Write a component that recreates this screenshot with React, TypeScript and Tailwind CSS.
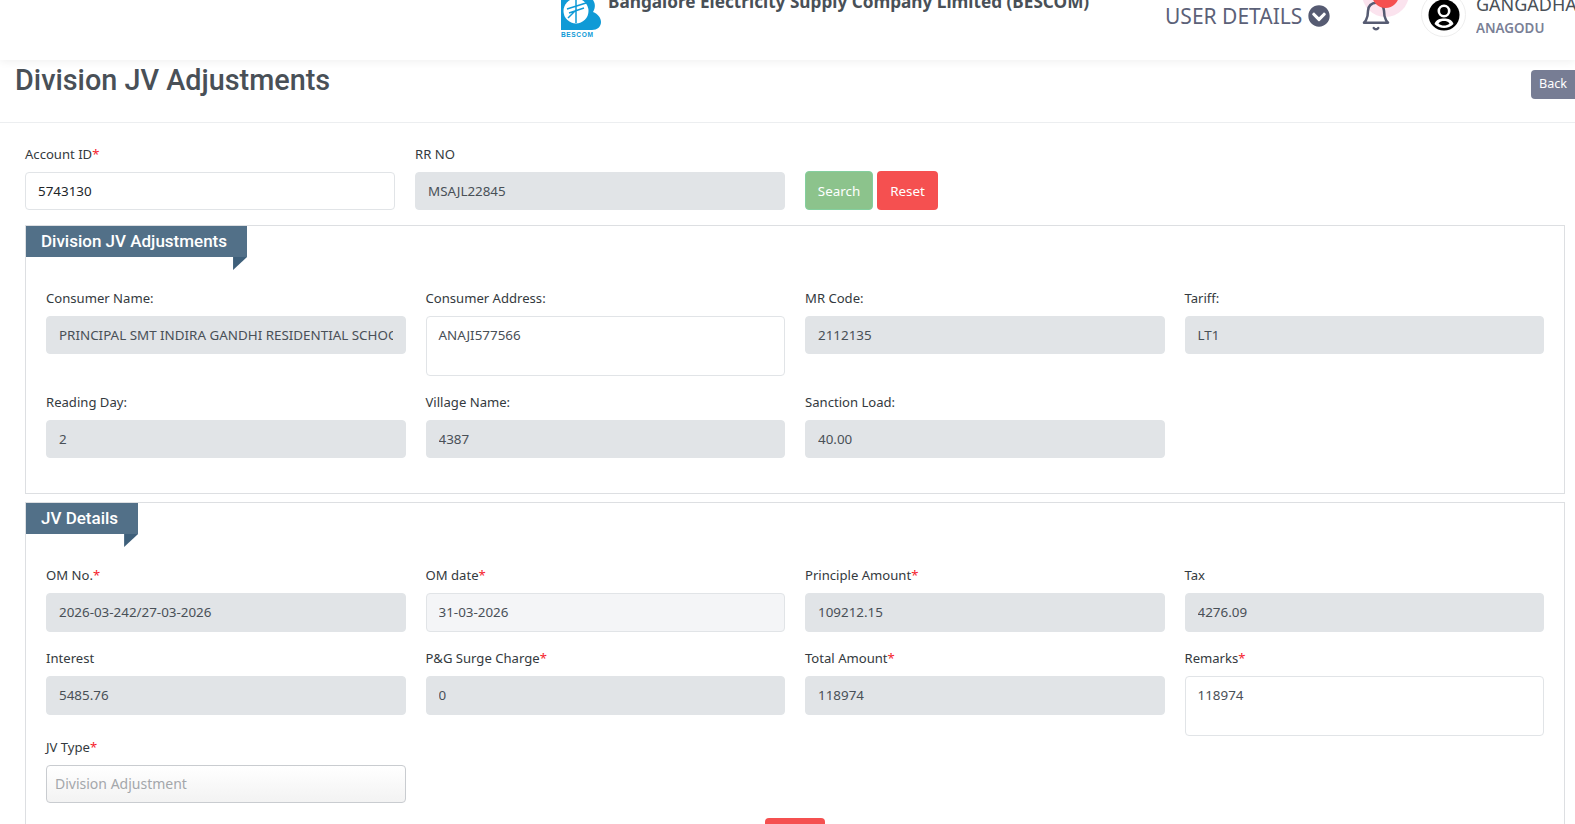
import React from "react";
import { FaChevronCircleDown } from "react-icons/fa";
import { LuBell } from "react-icons/lu";

const body = "[font-family:'Noto_Sans',sans-serif]";

function Req() {
  return <span className="text-[#f5222d]">*</span>;
}

function Label({ text, req }: { text: string; req?: boolean }) {
  return (
    <label className="block text-[13.1px] leading-[20px] text-[#343a40]">
      {text}
      {req && <Req />}
    </label>
  );
}

function Field({ label, value, req, h = "h-[38px]", mb = "mb-[8px]" }: { label: string; value: string; req?: boolean; h?: string; mb?: string }) {
  return (
    <div className={mb}>
      <Label text={label} req={req} />
      <input
        readOnly
        defaultValue={value}
        className={`mt-[8px] block w-full ${h} rounded-[4px] border border-[#e1e4e7] bg-[#e1e4e7] px-[12px] text-[13.4px] text-[#495057] outline-none`}
      />
    </div>
  );
}

function Area({ label, value, req }: { label: string; value: string; req?: boolean }) {
  return (
    <div>
      <Label text={label} req={req} />
      <textarea
        readOnly
        defaultValue={value}
        className="mt-[8px] block h-[60px] w-full resize-none rounded-[4px] border border-[#e1e4e7] bg-white px-[12px] py-[8px] text-[13.4px] leading-[20px] text-[#495057] outline-none"
      />
    </div>
  );
}

function Ribbon({ text }: { text: string }) {
  return (
    <div className="relative w-fit bg-[#527088] pl-[15px] pr-[20px] text-[17px] font-medium leading-[31px] text-white [font-family:Roboto,sans-serif]">
      {text}
      <div className="absolute right-0 top-full h-[13px] w-[14px] bg-[#3e5f7a] [clip-path:polygon(0_0,100%_0,0_100%)]" />
    </div>
  );
}

function Logo() {
  return (
    <div className="flex w-[40px] flex-col items-start">
      <svg width="40" height="30" viewBox="0 0 40 30" className="block">
        <path d="M0 0H32C34 3 35 7 32 12C37 14 40 18 40 22C40 27 36 30 31 30H0Z" fill="#0f9ad6" />
        <circle cx="15" cy="11" r="12.5" fill="#ffffff" />
        <path d="M15 0V23M6 9L25 3M8 13L23 8M15 10L7 18" stroke="#0f9ad6" strokeWidth="1.5" fill="none" />
      </svg>
      <span className="mt-[2px] text-[6.6px] font-black leading-[6px] tracking-[0.6px] text-[#0f9ad6] [font-family:'Liberation_Sans',sans-serif]">BESCOM</span>
    </div>
  );
}

function Avatar() {
  return (
    <svg width="32" height="32" viewBox="0 0 32 32" className="block">
      <circle cx="16" cy="16" r="15.5" fill="#000000" />
      <circle cx="16" cy="12" r="5.2" fill="none" stroke="#ffffff" strokeWidth="2.6" />
      <path d="M6.5 25C8 20.5 12 19.5 16 19.5C20 19.5 24 20.5 25.5 25C23 27.8 19.5 29 16 29C12.5 29 9 27.8 6.5 25Z" fill="#ffffff" />
      <path d="M10.5 24.5C11.8 22.6 14 22 16 22C18 22 20.2 22.6 21.5 24.5C20 26 18 26.6 16 26.6C14 26.6 12 26 10.5 24.5Z" fill="#000000" />
    </svg>
  );
}

function Header() {
  return (
    <header className="flex h-[60px] items-start overflow-hidden bg-white pl-[561px] shadow-[0_2px_8px_rgba(0,0,0,0.06)]">
      <div className="-mt-[4px] flex items-start">
        <div className="mt-[4px]"><Logo /></div>
        <div className="ml-[7px] -mt-[6px] w-[530px] whitespace-nowrap text-[17.2px] font-bold leading-[24px] text-[#495057]">
          Bangalore Electricity Supply Company Limited (BESCOM)
        </div>
      </div>
      <div className="ml-[27px] mt-[1px] flex items-center whitespace-nowrap text-[21px] leading-[30px] text-[#5c6178]">
        USER DETAILS
        <FaChevronCircleDown className="ml-[6px] text-[22px] text-[#565b72]" />
      </div>
      <div className="relative ml-[30px] mt-0 h-[32px] w-[32px] text-[#565b72]">
        <span className="absolute -top-[30px] left-[2px] h-[47px] w-[47px] rounded-full bg-[#fbe3ee]" />
        <LuBell size={32} strokeWidth={1.9} className="relative" />
        <span className="absolute -top-[19px] left-[12px] h-[27px] w-[27px] rounded-full bg-[#f55050]" />
      </div>
      <div className="ml-[29px] -mt-[8px] flex h-[45px] w-[45px] items-center justify-center rounded-full border border-[#eeeeee] bg-white">
        <Avatar />
      </div>
      <div className="ml-[10px] -mt-[8px] w-[100px] overflow-hidden whitespace-nowrap">
        <div className="text-[18px] leading-[24px] text-[#495057]">GANGADHARA</div>
        <div className="mt-[3px] text-[13.4px] font-semibold leading-[18px] text-[#7a7f96]">ANAGODU</div>
      </div>
    </header>
  );
}

export default function App() {
  return (
    <div className={`h-[824px] w-[1575px] overflow-hidden bg-white ${body}`}>
      <Header />
      <div className="flex h-[63px] items-start justify-between border-b border-[#eceef0]">
        <h1 className="ml-[15px] mt-[2px] text-[28.8px] font-medium leading-[36px] text-[#495057] [font-family:Roboto,sans-serif]">Division JV Adjustments</h1>
        <button className="mt-[10px] h-[29px] w-[44px] rounded-l-[4px] bg-[#777d94] text-[12.6px] text-white">Back</button>
      </div>

      <div className="px-[25px] pt-[21px]">
        <div className="flex gap-[20px]">
          <div className="w-[370px]">
            <Label text="Account ID" req />
            <input defaultValue="5743130" className="mt-[8px] block h-[38px] w-full rounded-[4px] border border-[#e1e4e7] bg-white px-[12px] text-[13.4px] text-[#212529] outline-none" />
          </div>
          <div className="w-[370px]">
            <Label text="RR NO" />
            <input readOnly defaultValue="MSAJL22845" className="mt-[8px] block h-[38px] w-full rounded-[4px] border border-[#e1e4e7] bg-[#e1e4e7] px-[12px] text-[13.4px] text-[#495057] outline-none" />
          </div>
          <div className="mt-[27px] flex h-[39px] gap-[4px]">
            <button className="w-[68px] rounded-[4px] border border-[#84cf9e] bg-[#8cc38c] pt-[1px] text-[13.4px] text-white">Search</button>
            <button className="w-[61px] rounded-[4px] bg-[#f55050] pt-[1px] text-[13.4px] text-white">Reset</button>
          </div>
        </div>

        <section className="mt-[15px] h-[269px] w-[1540px] border border-[#dddfe2]">
          <Ribbon text="Division JV Adjustments" />
          <div className="grid grid-cols-4 gap-x-[20px] px-[20px] pt-[31px]">
            <Field label="Consumer Name:" value="PRINCIPAL SMT INDIRA GANDHI RESIDENTIAL SCHOOL" />
            <Area label="Consumer Address:" value="ANAJI577566" />
            <Field label="MR Code:" value="2112135" />
            <Field label="Tariff:" value="LT1" />
            <div className="mt-[16px] col-start-1"><Field label="Reading Day:" value="2" /></div>
            <div className="mt-[16px]"><Field label="Village Name:" value="4387" /></div>
            <div className="mt-[16px]"><Field label="Sanction Load:" value="40.00" /></div>
          </div>
        </section>

        <section className="mt-[8px] h-[400px] w-[1540px] border border-[#dddfe2]">
          <Ribbon text="JV Details" />
          <div className="grid grid-cols-4 gap-x-[20px] px-[20px] pt-[31px]">
            <Field label="OM No." req value="2026-03-242/27-03-2026" h="h-[39px] pb-[1px]" mb="mb-[16px]" />
            <div className="mb-[16px]">
              <Label text="OM date" req />
              <input readOnly defaultValue="31-03-2026" className="mt-[8px] block h-[39px] w-full rounded-[4px] border border-[#e1e4e7] bg-[#f4f5f7] px-[12px] pb-[1px] text-[13.4px] text-[#495057] outline-none" />
            </div>
            <Field label="Principle Amount" req value="109212.15" h="h-[39px] pb-[1px]" mb="mb-[16px]" />
            <Field label="Tax" value="4276.09" h="h-[39px] pb-[1px]" mb="mb-[16px]" />
            <Field label="Interest" value="5485.76" h="h-[39px] pb-[1px]" />
            <Field label="P&G Surge Charge" req value="0" h="h-[39px] pb-[1px]" />
            <Field label="Total Amount" req value="118974" h="h-[39px] pb-[1px]" />
            <Area label="Remarks" req value="118974" />
            <div className="col-start-1 mt-[1px]">
              <Label text="JV Type" req />
              <div className="mt-[8px] flex h-[38px] items-center rounded-[4px] border border-[#c9ccd0] bg-gradient-to-b from-white to-[#f3f3f3] px-[8px] pb-[1px] text-[14px] text-[#a4a7ab]">
                Division Adjustment
              </div>
            </div>
          </div>
          <div className="mt-[15px] flex justify-center">
            <button className="h-[40px] w-[60px] rounded-[4px] bg-[#f55050] text-[13.4px] text-white">Save</button>
          </div>
        </section>
      </div>
    </div>
  );
}
